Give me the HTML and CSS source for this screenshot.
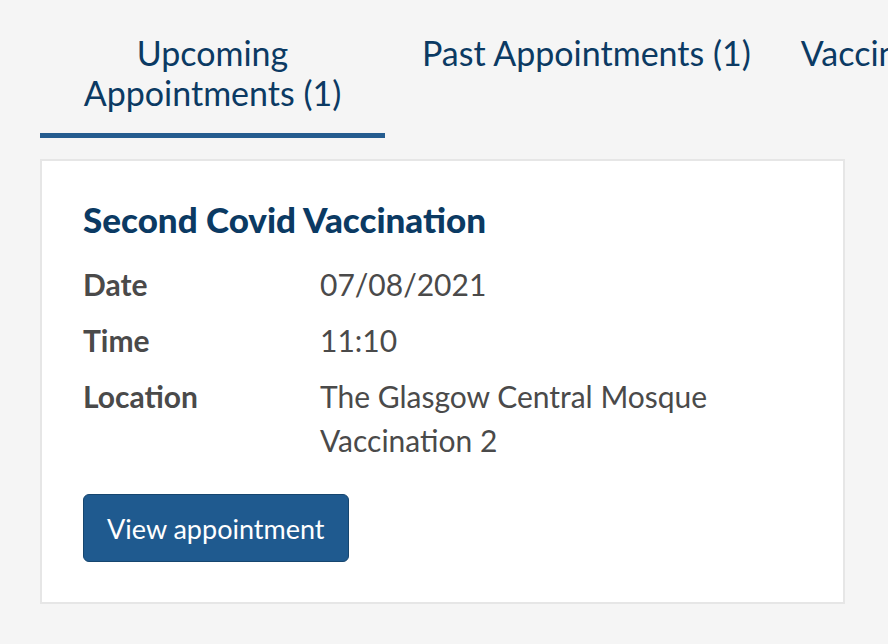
FILE: index.html
```html
<!DOCTYPE html>
<html lang="en">
<head>
<meta charset="utf-8">
<title>Appointments</title>
<link rel="stylesheet" href="styles.css">
</head>
<body>
<div class="page">
  <nav class="tabs">
    <a class="tab tab-active">Upcoming Appointments (1)</a>
    <a class="tab">Past Appointments (1)</a>
    <a class="tab">Vaccination Records</a>
  </nav>
  <section class="card">
    <h2 class="card-title">Second Covid Vaccination</h2>
    <dl class="details">
      <div class="row"><dt>Date</dt><dd>07/08/2021</dd></div>
      <div class="row"><dt>Time</dt><dd>11:10</dd></div>
      <div class="row"><dt>Location</dt><dd>The Glasgow Central Mosque<br>Vaccination 2</dd></div>
    </dl>
    <button class="btn" type="button">View appointment</button>
  </section>
</div>
</body>
</html>
```
FILE: styles.css
```css
* { box-sizing: border-box; }
html, body { margin: 0; padding: 0; }
body {
  background: #f5f5f5;
  font-family: Lato, "Noto Sans", sans-serif;
  width: 888px;
  height: 644px;
  overflow: hidden;
}
.page {
  padding: 0 40px;
}
.tabs {
  display: flex;
  white-space: nowrap;
  padding-top: 33px;
}
.tab {
  flex: none;
  color: #0b3a63;
  font-size: 34px;
  line-height: 40px;
  text-align: center;
  text-decoration: none;
}
.tab + .tab { margin-left: 50px; }
.tab-active {
  width: 345px;
  white-space: normal;
  padding: 0 30px 20px;
  border-bottom: 5px solid #255c8f;
  margin-right: -13px;
}
.card {
  margin-top: 21px;
  width: 805px;
  background: #fff;
  border: 2px solid #e6e6e6;
  padding: 38px 41px 40px;
}
.card-title {
  margin: 0 0 23px;
  font-size: 35px;
  line-height: 40px;
  font-weight: 900;
  color: #0b3a63;
}
.details { margin: 0 0 32px; }
.row {
  display: flex;
  font-size: 30px;
  line-height: 44px;
  color: #4a4a4a;
  margin-bottom: 12px;
}
.row:last-child { margin-bottom: 0; }
.row dt {
  width: 237px;
  font-weight: 700;
}
.row dd { margin: 0; }
.btn {
  display: block;
  font-family: inherit;
  font-size: 27px;
  color: #fff;
  background: #1f5a8f;
  border: 1px solid #16466f;
  border-radius: 6px;
  height: 68px;
  padding: 0 23px;
}
```
